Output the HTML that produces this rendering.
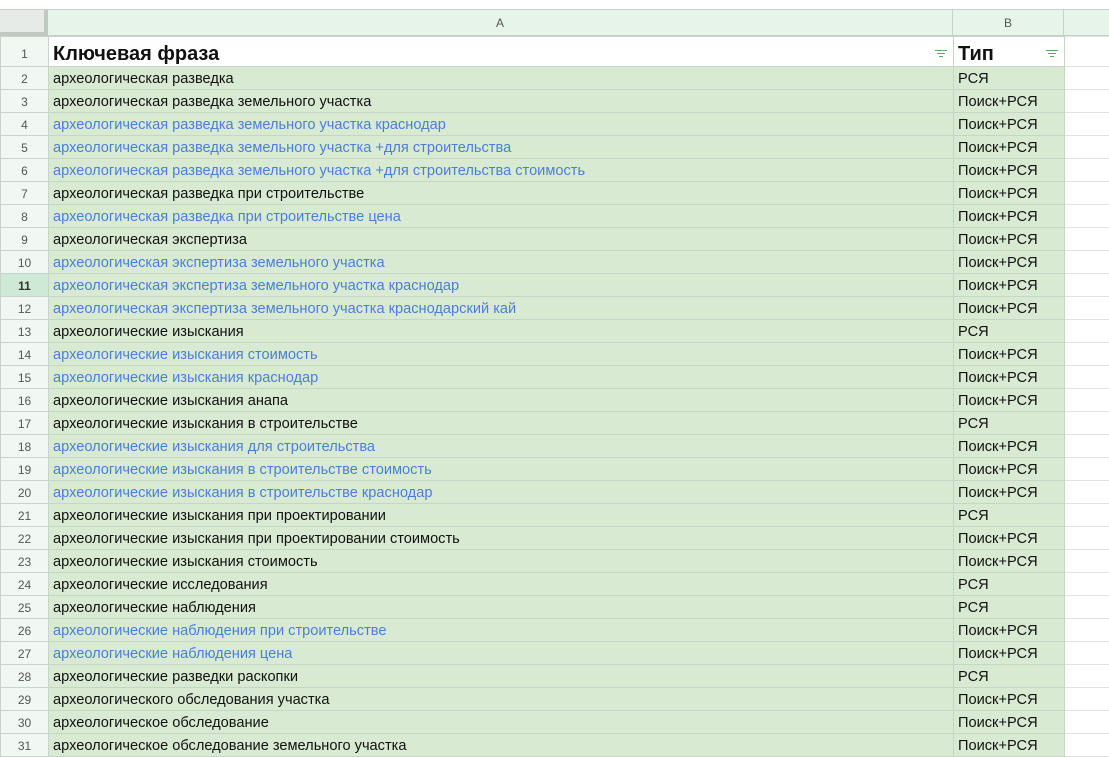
<!DOCTYPE html><html><head><meta charset="utf-8"><style>
*{margin:0;padding:0;box-sizing:border-box}
body{width:1109px;height:754px;overflow:hidden;background:#fff;font-family:"Liberation Sans",Arial,sans-serif;position:relative}
.top{position:absolute;left:0;top:0;width:1109px;height:10px;background:#fff;border-bottom:1px solid #c8d2cb}
.corner{position:absolute;left:0;top:10px;width:48px;height:26px;background:#e6ebe8;border-right:4px solid #c0c8c2;border-bottom:4px solid #c0c8c2}
.ch{position:absolute;top:10px;height:26px;background:#e6f4ea;border-right:1px solid #c6d0c9;border-bottom:1px solid #c6d0c9;font-size:12px;color:#555;text-align:center;line-height:26px}
table{position:absolute;left:0;top:36px;border-collapse:collapse;table-layout:fixed;width:1124px}
td{height:23px;border:1px solid #c6d6c6;font-size:14.6px;padding:2px 4px 0;white-space:nowrap;overflow:hidden;background:#d9ead3;color:#111;line-height:19px}
td.n{background:#f1f8f3;color:#555;font-size:12px;text-align:center;border-color:#c9d3cc}
td.e{background:#fff;border-color:#e2e2e2}
tr.h td{height:30px;background:#fff;font-size:20px;font-weight:bold;position:relative;padding-top:4px;line-height:24px}
tr.h td.n{font-size:12px;font-weight:normal;background:#f1f8f3}
.l{color:#4a7fd9}
tr.s td.n{background:#cfe9d7;font-weight:bold;color:#333}
.f{position:absolute;right:6px;top:13px;width:12px}
.f i{display:block;height:1px;background:#5aa86f;margin:0 auto 2px}
</style></head><body>
<div class="top"></div>
<div class="corner"></div>
<div class="ch" style="left:48px;width:905px">A</div>
<div class="ch" style="left:953px;width:111px">B</div>
<div class="ch" style="left:1064px;width:45px;border-right:none"></div>
<table>
<colgroup><col style="width:48px"><col style="width:905px"><col style="width:111px"><col style="width:60px"></colgroup>
<tr class="h"><td class="n">1</td><td>Ключевая фраза<span class="f"><i style="width:12px"></i><i style="width:8px"></i><i style="width:4px"></i></span></td><td>Тип<span class="f"><i style="width:12px"></i><i style="width:8px"></i><i style="width:4px"></i></span></td><td class="e"></td></tr>
<tr><td class="n">2</td><td>археологическая разведка</td><td>РСЯ</td><td class="e"></td></tr>
<tr><td class="n">3</td><td>археологическая разведка земельного участка</td><td>Поиск+РСЯ</td><td class="e"></td></tr>
<tr><td class="n">4</td><td class="l">археологическая разведка земельного участка краснодар</td><td>Поиск+РСЯ</td><td class="e"></td></tr>
<tr><td class="n">5</td><td class="l">археологическая разведка земельного участка +для строительства</td><td>Поиск+РСЯ</td><td class="e"></td></tr>
<tr><td class="n">6</td><td class="l">археологическая разведка земельного участка +для строительства стоимость</td><td>Поиск+РСЯ</td><td class="e"></td></tr>
<tr><td class="n">7</td><td>археологическая разведка при строительстве</td><td>Поиск+РСЯ</td><td class="e"></td></tr>
<tr><td class="n">8</td><td class="l">археологическая разведка при строительстве цена</td><td>Поиск+РСЯ</td><td class="e"></td></tr>
<tr><td class="n">9</td><td>археологическая экспертиза</td><td>Поиск+РСЯ</td><td class="e"></td></tr>
<tr><td class="n">10</td><td class="l">археологическая экспертиза земельного участка</td><td>Поиск+РСЯ</td><td class="e"></td></tr>
<tr class="s"><td class="n">11</td><td class="l">археологическая экспертиза земельного участка краснодар</td><td>Поиск+РСЯ</td><td class="e"></td></tr>
<tr><td class="n">12</td><td class="l">археологическая экспертиза земельного участка краснодарский кай</td><td>Поиск+РСЯ</td><td class="e"></td></tr>
<tr><td class="n">13</td><td>археологические изыскания</td><td>РСЯ</td><td class="e"></td></tr>
<tr><td class="n">14</td><td class="l">археологические изыскания стоимость</td><td>Поиск+РСЯ</td><td class="e"></td></tr>
<tr><td class="n">15</td><td class="l">археологические изыскания краснодар</td><td>Поиск+РСЯ</td><td class="e"></td></tr>
<tr><td class="n">16</td><td>археологические изыскания анапа</td><td>Поиск+РСЯ</td><td class="e"></td></tr>
<tr><td class="n">17</td><td>археологические изыскания в строительстве</td><td>РСЯ</td><td class="e"></td></tr>
<tr><td class="n">18</td><td class="l">археологические изыскания для строительства</td><td>Поиск+РСЯ</td><td class="e"></td></tr>
<tr><td class="n">19</td><td class="l">археологические изыскания в строительстве стоимость</td><td>Поиск+РСЯ</td><td class="e"></td></tr>
<tr><td class="n">20</td><td class="l">археологические изыскания в строительстве краснодар</td><td>Поиск+РСЯ</td><td class="e"></td></tr>
<tr><td class="n">21</td><td>археологические изыскания при проектировании</td><td>РСЯ</td><td class="e"></td></tr>
<tr><td class="n">22</td><td>археологические изыскания при проектировании стоимость</td><td>Поиск+РСЯ</td><td class="e"></td></tr>
<tr><td class="n">23</td><td>археологические изыскания стоимость</td><td>Поиск+РСЯ</td><td class="e"></td></tr>
<tr><td class="n">24</td><td>археологические исследования</td><td>РСЯ</td><td class="e"></td></tr>
<tr><td class="n">25</td><td>археологические наблюдения</td><td>РСЯ</td><td class="e"></td></tr>
<tr><td class="n">26</td><td class="l">археологические наблюдения при строительстве</td><td>Поиск+РСЯ</td><td class="e"></td></tr>
<tr><td class="n">27</td><td class="l">археологические наблюдения цена</td><td>Поиск+РСЯ</td><td class="e"></td></tr>
<tr><td class="n">28</td><td>археологические разведки раскопки</td><td>РСЯ</td><td class="e"></td></tr>
<tr><td class="n">29</td><td>археологического обследования участка</td><td>Поиск+РСЯ</td><td class="e"></td></tr>
<tr><td class="n">30</td><td>археологическое обследование</td><td>Поиск+РСЯ</td><td class="e"></td></tr>
<tr><td class="n">31</td><td>археологическое обследование земельного участка</td><td>Поиск+РСЯ</td><td class="e"></td></tr>
</table>
</body></html>
